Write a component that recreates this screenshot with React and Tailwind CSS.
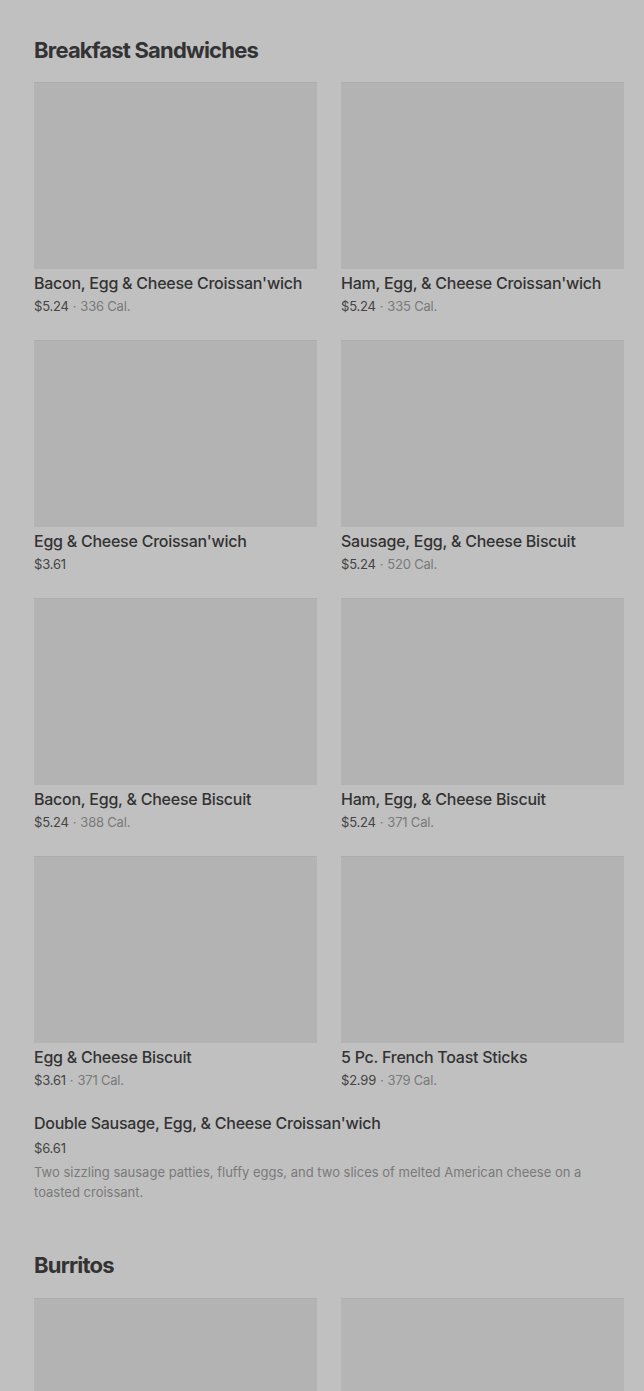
const breakfast = [
  { name: "Bacon, Egg & Cheese Croissan'wich", price: '$5.24', cal: '336 Cal.' },
  { name: "Ham, Egg, & Cheese Croissan'wich", price: '$5.24', cal: '335 Cal.' },
  { name: "Egg & Cheese Croissan'wich", price: '$3.61' },
  { name: 'Sausage, Egg, & Cheese Biscuit', price: '$5.24', cal: '520 Cal.' },
  { name: 'Bacon, Egg, & Cheese Biscuit', price: '$5.24', cal: '388 Cal.' },
  { name: 'Ham, Egg, & Cheese Biscuit', price: '$5.24', cal: '371 Cal.' },
  { name: 'Egg & Cheese Biscuit', price: '$3.61', cal: '371 Cal.' },
  { name: '5 Pc. French Toast Sticks', price: '$2.99', cal: '379 Cal.' },
];

function ItemCard({ item }) {
  return (
    <div>
      <div className="h-[187px] bg-[#b3b3b3] border-t border-[#adadad]" />
      <div className="mt-1 text-[16px] leading-5 font-medium tracking-[-0.25px] text-[#333]">{item.name}</div>
      <div className="mt-[3px] text-[13px] leading-5 tracking-[-0.2px] text-[#444]">
        {item.price}
        {item.cal && (
          <span className="text-[#7a7a7a]">
            <span className="mx-1">·</span>
            {item.cal}
          </span>
        )}
      </div>
    </div>
  );
}

export default function App() {
  return (
    <div className="h-[1391px] bg-[#c0c0c0] pl-[34px] pr-[20px] pt-[35px] font-['Inter',sans-serif] overflow-hidden">
      <h2 className="text-[22px] leading-[30px] font-bold tracking-[-0.8px] text-[#333]">Breakfast Sandwiches</h2>
      <div className="mt-[17px] grid grid-cols-2 gap-x-6 gap-y-6">
        {breakfast.map((item) => (
          <ItemCard key={item.name} item={item} />
        ))}
      </div>
      <div className="mt-[23px]">
        <div className="text-[16px] leading-5 font-medium tracking-[-0.25px] text-[#333]">Double Sausage, Egg, &amp; Cheese Croissan'wich</div>
        <div className="mt-[5px] text-[13px] leading-5 tracking-[-0.2px] text-[#444]">$6.61</div>
        <p className="mt-1 text-[13px] leading-5 text-[#7a7a7a]">
          Two sizzling sausage patties, fluffy eggs, and two slices of melted American cheese on a toasted croissant.
        </p>
      </div>
      <h2 className="mt-[48px] text-[22px] leading-[30px] font-bold tracking-[-0.8px] text-[#333]">Burritos</h2>
      <div className="mt-[18px] grid grid-cols-2 gap-x-6">
        <div className="h-[187px] bg-[#b3b3b3] border-t border-[#adadad]" />
        <div className="h-[187px] bg-[#b5b5b5] border-t border-[#adadad]" />
      </div>
    </div>
  );
}
